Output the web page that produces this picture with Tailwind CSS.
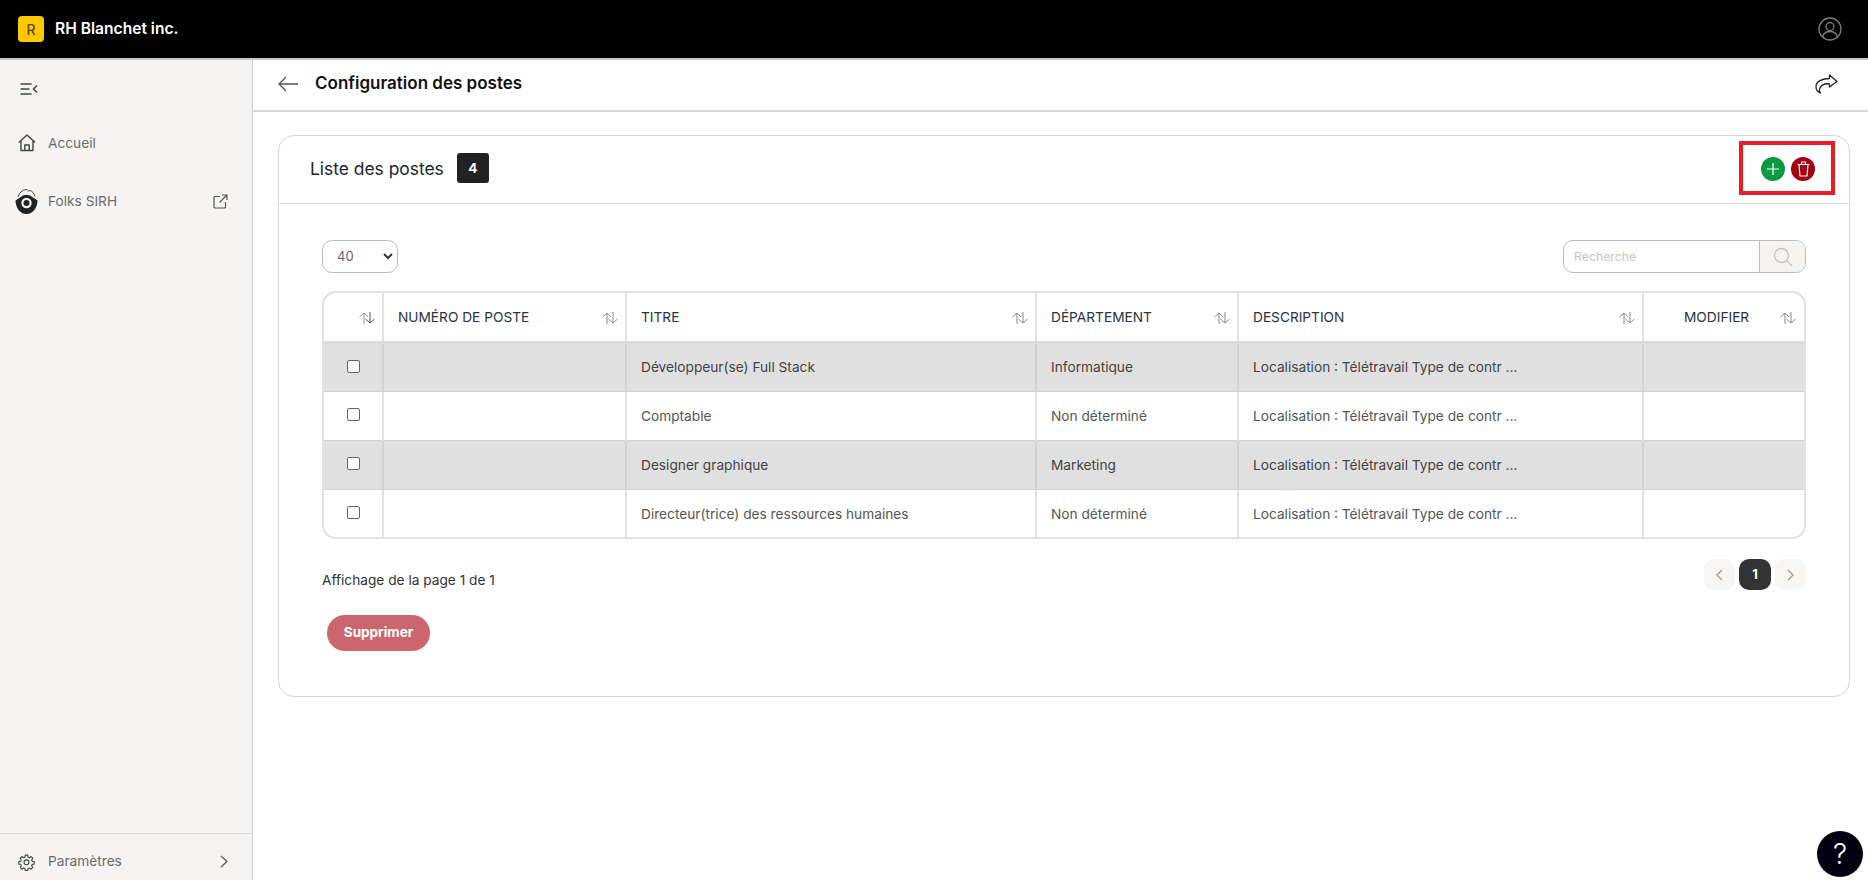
<!DOCTYPE html>
<html lang="fr">
<head>
  <meta charset="UTF-8" />
  <meta name="viewport" content="width=device-width, initial-scale=1.0"/>
  <title>Configuration des postes</title>
  <script src="https://cdn.jsdelivr.net/npm/@tailwindcss/browser@4"></script>
</head>
<body class="h-screen overflow-hidden bg-white font-['Inter',sans-serif] flex flex-col">

  <!-- Top bar -->
  <header class="h-[60px] shrink-0 bg-black border-b-2 border-[#c9c9c9] flex items-center justify-between pl-[18px] pr-[26px]">
    <div class="flex items-center gap-[11px]">
      <div class="w-[26px] h-[26px] rounded-[4px] bg-[#ffc800] flex items-center justify-center text-[14px] font-medium text-[#5c4400]">R</div>
      <span class="text-white text-[15.600px] font-semibold">RH Blanchet inc.</span>
    </div>
    <svg class="w-[24px] h-[24px] text-[#7d7d7d]" viewBox="0 0 24 24" fill="none" stroke="currentColor" stroke-width="1.300">
      <circle cx="12" cy="12" r="11"/>
      <circle cx="12" cy="9.500" r="4"/>
      <path d="M4.500 20c1-3.600 4-5.500 7.500-5.500s6.500 1.900 7.500 5.500"/>
    </svg>
  </header>

  <div class="flex flex-1 min-h-0">
    <!-- Sidebar -->
    <aside class="w-[253px] shrink-0 bg-[#f5f4f2] border-r border-[#d0d0d0] flex flex-col justify-between text-[13.700px] text-[#6b6b6b]">
      <div>
        <div class="h-[50px] flex items-center pl-[20px]">
          <svg class="w-[18px] h-[14px] text-[#444] mt-[7px]" viewBox="0 0 18 14" fill="none" stroke="currentColor" stroke-width="1.500">
            <path d="M0.500 2h11M0.500 7h9M0.500 12h11M17 3.500l-3.500 3.500 3.500 3.500"/>
          </svg>
        </div>
        <div class="flex items-center mt-[15px] h-[36px] pl-[18px]">
          <svg class="w-[18px] h-[18px] text-[#444]" viewBox="0 0 18 18" fill="none" stroke="currentColor" stroke-width="1.400" stroke-linejoin="round">
            <path d="M0.800 8.500 9 1l8.200 7.500M3 7v9.500h12V7"/>
            <path d="M6.800 16.500v-5.500h4.400v5.500"/>
          </svg>
          <span class="ml-[12px]">Accueil</span>
        </div>
        <div class="flex items-center mt-[22px] h-[36px] pl-[15px] pr-[24px]">
          <svg class="w-[23px] h-[27px]" viewBox="0 0 23 27" fill="none">
            <path d="M3 9C5 3 9 1.500 12 1.500c1 1.500 1.500 2 3 1 2 .5 4 2.500 5 6" stroke="#444" stroke-width="1"/>
            <path d="M0.500 12.500 5 9.500a9 9 0 0 1 13 0l4.500 3c0 7-4.500 13.500-11 13.500S.5 19.500.5 12.500z" fill="#222"/>
            <circle cx="11.500" cy="15" r="5.200" fill="#f5f4f2"/>
            <circle cx="11.500" cy="15" r="3" fill="#222"/>
          </svg>
          <span class="ml-[10px] flex-1">Folks SIRH</span>
          <svg class="w-[15px] h-[15px] text-[#555]" viewBox="0 0 15 15" fill="none" stroke="currentColor" stroke-width="1.200">
            <path d="M7 2.500H2a1 1 0 0 0-1 1V13a1 1 0 0 0 1 1h9.500a1 1 0 0 0 1-1V8M9 1h5v5M14 1 6.500 8.500"/>
          </svg>
        </div>
      </div>
      <div class="h-[47px] border-t border-[#dcdcdc] flex items-center pt-[9px] pl-[18px] pr-[24px]">
        <svg class="w-[17px] h-[18px] text-[#444]" viewBox="0 0 24 24" fill="none" stroke="currentColor" stroke-width="1.600" stroke-linecap="round" stroke-linejoin="round">
          <path d="M10.300 2.300h3.400l.5 2.800 1.900.8 2.400-1.600 2.400 2.400-1.600 2.400.8 1.900 2.800.5v3.400l-2.800.5-.8 1.900 1.600 2.400-2.400 2.400-2.400-1.600-1.900.8-.5 2.800h-3.400l-.5-2.800-1.900-.8-2.400 1.600-2.400-2.400 1.600-2.400-.8-1.900-2.800-.5v-3.400l2.800-.5.8-1.900-1.600-2.400 2.400-2.400 2.400 1.600 1.900-.8z"/>
          <circle cx="12" cy="12.500" r="3.500"/>
        </svg>
        <span class="ml-[13px] flex-1">Paramètres</span>
        <svg class="w-[8px] h-[13px] text-[#555]" viewBox="0 0 8 13" fill="none" stroke="currentColor" stroke-width="1.200"><path d="m1 1 6 5.500L1 12"/></svg>
      </div>
    </aside>

    <main class="flex-1 min-w-0 relative">
      <!-- Page title -->
      <div class="h-[52px] border-b-2 border-[#d6d6d6] flex items-center justify-between pl-[25px] pr-[30px]">
        <div class="flex items-center gap-[17px] mt-[-3px]">
          <svg class="w-[20px] h-[16px] text-[#555]" viewBox="0 0 20 16" fill="none" stroke="currentColor" stroke-width="1.300"><path d="M20 8H1M8 1 1 8l7 7"/></svg>
          <h1 class="text-[17px] font-semibold text-[#111]">Configuration des postes</h1>
        </div>
        <svg class="w-[23px] h-[20px] text-[#222] mt-[-3px]" viewBox="0 0 23 20" fill="none" stroke="currentColor" stroke-width="1.300" stroke-linejoin="round">
          <path d="M14.500 1 22 7.500 14.500 13v-3.200C9 9.500 5.500 11.500 4.500 15c-.5 1.500 0 3 1 4C2.500 18 1 15.500 1 12.500 1 7.500 7 4.500 14.500 4.500z"/>
        </svg>
      </div>

      <!-- Card -->
      <section class="relative mt-[23px] ml-[25px] w-[1572px] h-[562px] border border-[#d8d5d3] rounded-[16px]">
        <div class="h-[68px] border-b border-[#dcdcdc] flex items-center justify-between pl-[31px] pr-[34px]">
          <div class="flex items-center gap-[13px]">
            <h2 class="text-[17.400px] text-[#1b2433]">Liste des postes</h2>
            <span class="w-[32px] h-[30px] mt-[-3px] rounded-[3px] bg-[#222] text-white text-[13.500px] font-bold flex items-center justify-center">4</span>
          </div>
          <div class="flex items-center gap-[6px] mt-[-1px]">
            <button class="w-[24px] h-[24px] rounded-full bg-[#0a9a44] flex items-center justify-center">
              <svg class="w-[14px] h-[14px]" viewBox="0 0 14 14" fill="none" stroke="white" stroke-width="1.200"><path d="M7 1v12M1 7h12"/></svg>
            </button>
            <button class="w-[24px] h-[24px] rounded-full bg-[#a30012] flex items-center justify-center">
              <svg class="w-[13px] h-[16px]" viewBox="0 0 13 16" fill="none" stroke="white" stroke-width="1.200" stroke-linejoin="round"><path d="M0.500 3.500h12M4.500 3.500V1h4v2.500M2 3.500l1 11.500h7l1-11.500"/></svg>
            </button>
          </div>
        </div>

        <!-- Annotation box round the action buttons -->
        <div class="absolute left-[1460px] top-[5px] w-[96px] h-[54px] border-4 border-[#ea1c24]"></div>

        <div class="pt-[36px] pl-[43px] pr-[43px]">
          <div class="flex items-center justify-between">
            <div class="w-[76px] h-[33px] border border-[#bdbdbd] rounded-[10px] flex items-center justify-between pl-[14px] pr-[4px] text-[13px] text-[#666]">
              <span>40</span>
              <svg class="w-[10px] h-[7px] text-[#333]" viewBox="0 0 10 7" fill="none" stroke="currentColor" stroke-width="2"><path d="m1 1 4 4 4-4"/></svg>
            </div>
            <div class="w-[243px] h-[33px] border border-[#bdbdbd] rounded-[10px] flex overflow-hidden">
              <div class="w-[196px] border-r border-[#bdbdbd] pl-[10px] pt-[1px] flex items-center text-[12.300px] text-[#c9c5c2]">Recherche</div>
              <div class="flex-1 bg-[#f5f4f2] flex items-center justify-center">
                <svg class="w-[20px] h-[20px] text-[#c4c1be]" viewBox="0 0 20 20" fill="none" stroke="currentColor" stroke-width="1.300"><circle cx="8.500" cy="8.500" r="7"/><path d="m13.500 13.500 5.500 5.500"/></svg>
              </div>
            </div>
          </div>

          <!-- Table -->
          <div class="mt-[18px] w-[1484px] border-2 border-[#e2e2e2] rounded-[14px] overflow-hidden">
            <table class="w-full table-fixed border-collapse text-[13.700px] text-[#555]">
              <colgroup>
                <col class="w-[59px]"/><col class="w-[243px]"/><col class="w-[410px]"/><col class="w-[202px]"/><col class="w-[405px]"/><col/>
              </colgroup>
              <thead class="text-[#2b3240] font-normal">
                <tr class="h-[49px] border-b-[3px] border-[#dcdcdc]">
                  <th class="border-r-2 border-[#e2e2e2] font-normal pt-[2px] pr-[7px]">
                    <div class="flex justify-end"><svg class="w-[16px] h-[12px] text-[#555]" viewBox="0 0 16 12" fill="none" stroke="currentColor" stroke-width="1"><path opacity=".6" d="M5 12V1M.5 5 5 1l4 4"/><path d="M11 0v11M6.500 7l4.500 4 4.500-4"/></svg></div>
                  </th>
                  <th class="border-r-2 border-[#e2e2e2] font-normal pt-[2px] pl-[14px] pr-[7px]">
                    <div class="flex items-center justify-between">NUMÉRO DE POSTE<svg class="w-[16px] h-[12px] text-[#888]" viewBox="0 0 16 12" fill="none" stroke="currentColor" stroke-width="1"><path d="M5 12V1M.5 5 5 1l4 4M11 0v11M6.500 7l4.500 4 4.500-4"/></svg></div>
                  </th>
                  <th class="border-r-2 border-[#e2e2e2] font-normal pt-[2px] pl-[14px] pr-[7px]">
                    <div class="flex items-center justify-between">TITRE<svg class="w-[16px] h-[12px] text-[#888]" viewBox="0 0 16 12" fill="none" stroke="currentColor" stroke-width="1"><path d="M5 12V1M.5 5 5 1l4 4M11 0v11M6.500 7l4.500 4 4.500-4"/></svg></div>
                  </th>
                  <th class="border-r-2 border-[#e2e2e2] font-normal pt-[2px] pl-[14px] pr-[7px]">
                    <div class="flex items-center justify-between">DÉPARTEMENT<svg class="w-[16px] h-[12px] text-[#888]" viewBox="0 0 16 12" fill="none" stroke="currentColor" stroke-width="1"><path d="M5 12V1M.5 5 5 1l4 4M11 0v11M6.500 7l4.500 4 4.500-4"/></svg></div>
                  </th>
                  <th class="border-r-2 border-[#e2e2e2] font-normal pt-[2px] pl-[14px] pr-[7px]">
                    <div class="flex items-center justify-between">DESCRIPTION<svg class="w-[16px] h-[12px] text-[#888]" viewBox="0 0 16 12" fill="none" stroke="currentColor" stroke-width="1"><path d="M5 12V1M.5 5 5 1l4 4M11 0v11M6.500 7l4.500 4 4.500-4"/></svg></div>
                  </th>
                  <th class="font-normal pt-[2px] pl-[40px] pr-[8px]">
                    <div class="flex items-center justify-between">MODIFIER<svg class="w-[16px] h-[12px] text-[#888]" viewBox="0 0 16 12" fill="none" stroke="currentColor" stroke-width="1"><path d="M5 12V1M.5 5 5 1l4 4M11 0v11M6.500 7l4.500 4 4.500-4"/></svg></div>
                  </th>
                </tr>
              </thead>
              <tbody>
                <tr class="h-[49px] bg-[#e0e0e0] text-[#444] border-b border-[#d2d2d2]">
                  <td class="border-r-2 border-[#d2d2d2] pl-[23px] pb-[2px]"><span class="block w-[13px] h-[13px] border border-[#666] rounded-[2px] bg-white"></span></td>
                  <td class="border-r-2 border-[#d2d2d2]"></td>
                  <td class="border-r-2 border-[#d2d2d2] pl-[14px]">Développeur(se) Full Stack</td>
                  <td class="border-r-2 border-[#d2d2d2] pl-[14px]">Informatique</td>
                  <td class="border-r-2 border-[#d2d2d2] pl-[14px]">Localisation : Télétravail Type de contr ...</td>
                  <td></td>
                </tr>
                <tr class="h-[49px] bg-white border-b border-[#d2d2d2]">
                  <td class="border-r-2 border-[#e2e2e2] pl-[23px] pb-[2px]"><span class="block w-[13px] h-[13px] border border-[#666] rounded-[2px] bg-white"></span></td>
                  <td class="border-r-2 border-[#e2e2e2]"></td>
                  <td class="border-r-2 border-[#e2e2e2] pl-[14px] pt-[2px]">Comptable</td>
                  <td class="border-r-2 border-[#e2e2e2] pl-[14px] pt-[2px]">Non déterminé</td>
                  <td class="border-r-2 border-[#e2e2e2] pl-[14px] pt-[2px]">Localisation : Télétravail Type de contr ...</td>
                  <td></td>
                </tr>
                <tr class="h-[49px] bg-[#e0e0e0] text-[#444] border-b border-[#d2d2d2]">
                  <td class="border-r-2 border-[#d2d2d2] pl-[23px] pb-[2px]"><span class="block w-[13px] h-[13px] border border-[#666] rounded-[2px] bg-white"></span></td>
                  <td class="border-r-2 border-[#d2d2d2]"></td>
                  <td class="border-r-2 border-[#d2d2d2] pl-[14px] pt-[2px]">Designer graphique</td>
                  <td class="border-r-2 border-[#d2d2d2] pl-[14px] pt-[2px]">Marketing</td>
                  <td class="border-r-2 border-[#d2d2d2] pl-[14px] pt-[2px]">Localisation : Télétravail Type de contr ...</td>
                  <td></td>
                </tr>
                <tr class="h-[48px] bg-white">
                  <td class="border-r-2 border-[#e2e2e2] pl-[23px] pb-[2px]"><span class="block w-[13px] h-[13px] border border-[#666] rounded-[2px] bg-white"></span></td>
                  <td class="border-r-2 border-[#e2e2e2]"></td>
                  <td class="border-r-2 border-[#e2e2e2] pl-[14px] pt-[2px]">Directeur(trice) des ressources humaines</td>
                  <td class="border-r-2 border-[#e2e2e2] pl-[14px] pt-[2px]">Non déterminé</td>
                  <td class="border-r-2 border-[#e2e2e2] pl-[14px] pt-[2px]">Localisation : Télétravail Type de contr ...</td>
                  <td></td>
                </tr>
              </tbody>
            </table>
          </div>

          <!-- Footer of the table -->
          <div class="mt-[20px] flex items-start justify-between">
            <span class="mt-[11px] text-[13.700px] text-[#333]">Affichage de la page 1 de 1</span>
            <div class="flex gap-[4px]">
              <span class="w-[31px] h-[31px] rounded-[10px] bg-[#f7f6f5] flex items-center justify-center">
                <svg class="w-[7px] h-[12px] text-[#999]" viewBox="0 0 7 12" fill="none" stroke="currentColor" stroke-width="1.300"><path d="M6 1 1 6l5 5"/></svg>
              </span>
              <span class="w-[32px] h-[31px] rounded-[10px] bg-[#333] text-white text-[13px] font-bold flex items-center justify-center">1</span>
              <span class="w-[31px] h-[31px] rounded-[10px] bg-[#f7f6f5] flex items-center justify-center">
                <svg class="w-[7px] h-[12px] text-[#999]" viewBox="0 0 7 12" fill="none" stroke="currentColor" stroke-width="1.300"><path d="m1 1 5 5-5 5"/></svg>
              </span>
            </div>
          </div>

          <button class="mt-[24px] ml-[5px] w-[103px] h-[36px] rounded-full bg-[#cc666e] text-white text-[13.500px] font-bold flex items-center justify-center">Supprimer</button>
        </div>
      </section>

      <!-- Help button -->
      <button class="absolute right-[5px] bottom-[3px] w-[46px] h-[46px] rounded-full bg-[#000010] text-white text-[28px] font-light flex items-center justify-center">?</button>
    </main>
  </div>
</body>
</html>
